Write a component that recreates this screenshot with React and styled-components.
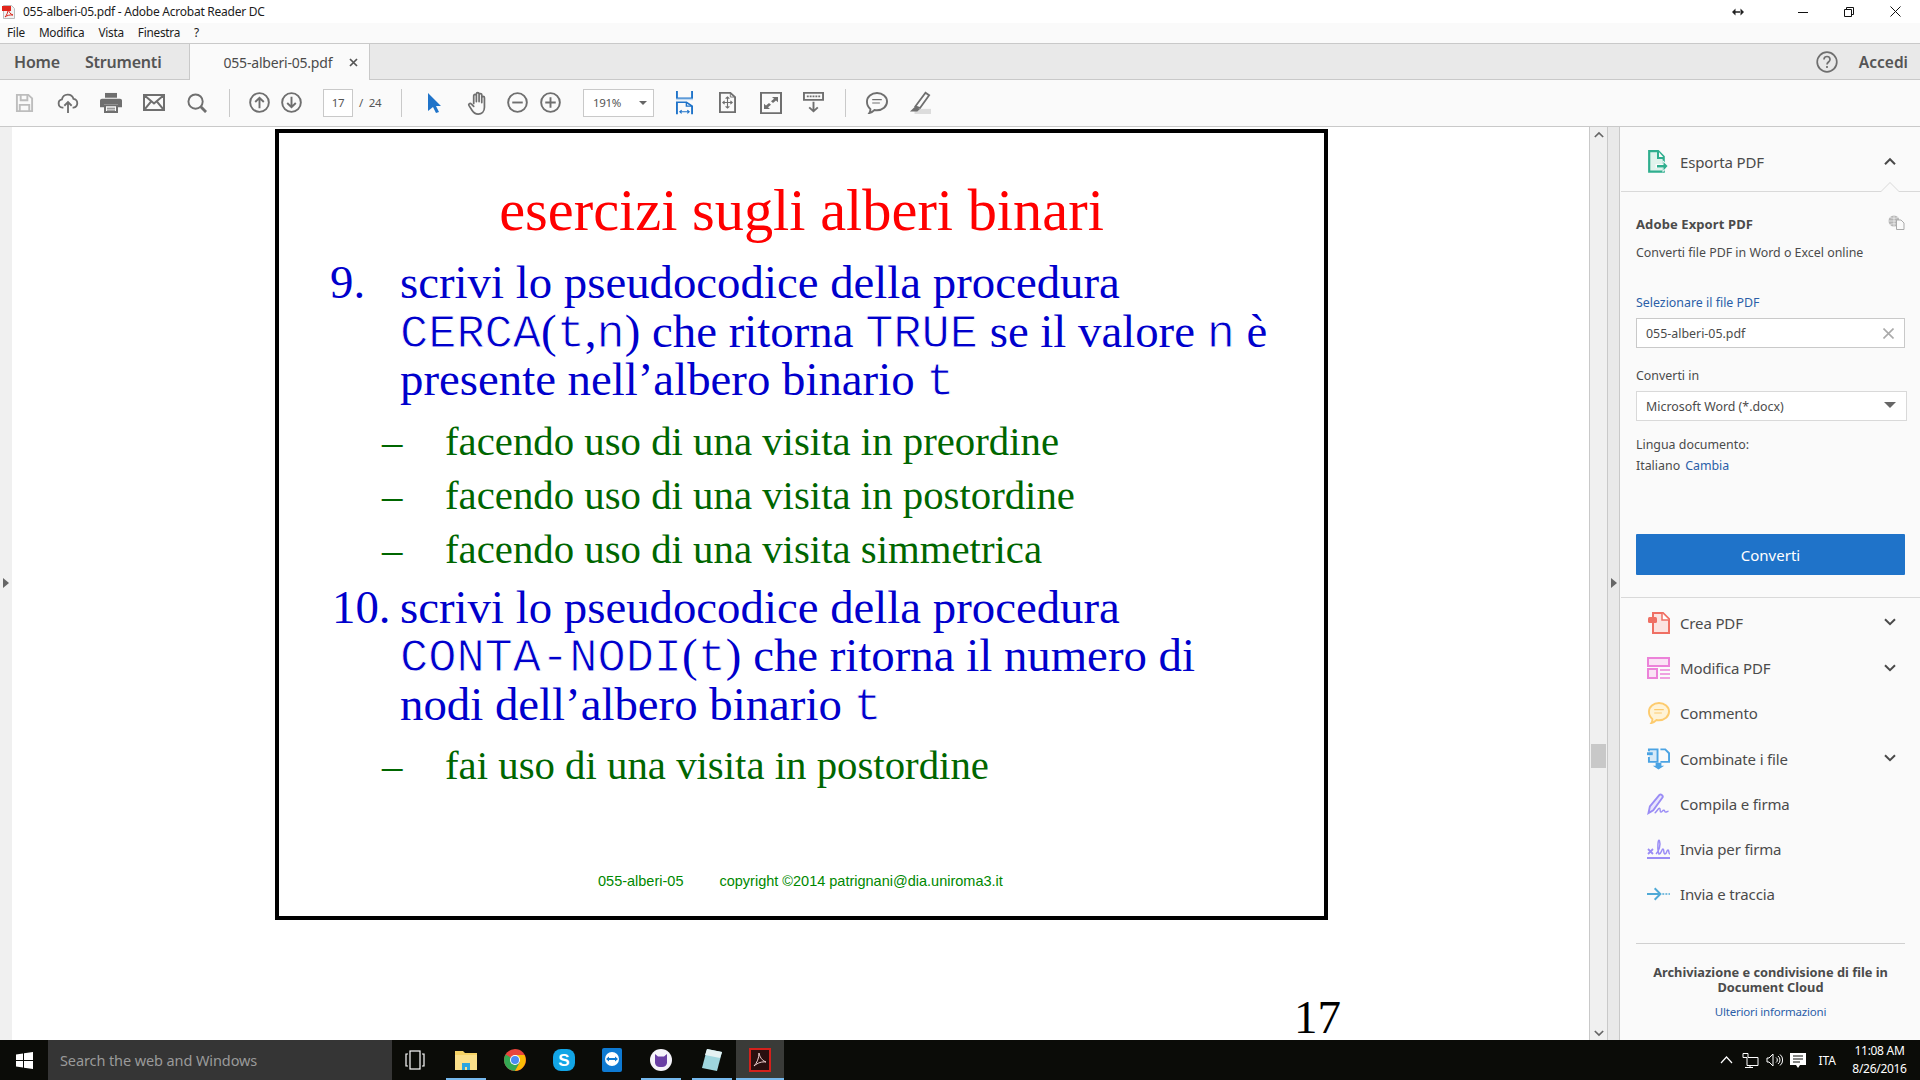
import React from 'react';
import styled, { createGlobalStyle } from 'styled-components';

const GlobalStyle = createGlobalStyle`
  html, body { margin: 0; padding: 0; width: 1920px; height: 1080px; overflow: hidden; background: #fff; }
  * { box-sizing: border-box; }
  body { font-family: "Noto Sans", "Open Sans", sans-serif; color: #4b4b4b; }
`;

const Screen = styled.div`
  width: 1920px;
  height: 1080px;
  display: flex;
  flex-direction: column;
`;

const TitleBar = styled.div`
  height: 23px;
  background: #fff;
  display: flex;
  align-items: center;
  padding: 0 2px 0 2px;
  font-size: 12px;
  letter-spacing: -0.25px;
  color: #1c1c1c;
  svg { display: block; }
`;
const TitleText = styled.span`
  margin-left: 7px;
  flex: 1;
`;
const WinButton = styled.div`
  width: ${(p) => p.$w || 46}px;
  height: 23px;
  display: flex;
  align-items: center;
  justify-content: center;
`;

const MenuBar = styled.div`
  height: 21px;
  background: #fafafa;
  border-bottom: 1px solid #c9c9c9;
  display: flex;
  align-items: center;
  padding: 0 0 2px 7px;
  gap: 14px;
  font-size: 11.8px;
  letter-spacing: -0.25px;
  color: #1c1c1c;
`;

const TabBar = styled.div`
  height: 36px;
  background: #e9e9e9;
  border-bottom: 1px solid #c9c9c9;
  display: flex;
  align-items: stretch;
`;
const NavTab = styled.div`
  font-size: 16px;
  font-weight: 600;
  color: #555;
  letter-spacing: -0.2px;
  display: flex;
  align-items: center;
  margin-left: ${(p) => p.$ml}px;
`;
const DocTab = styled.div`
  width: 181px;
  margin-left: 27px;
  height: 36px;
  background: #fafafa;
  border-left: 1px solid #c9c9c9;
  border-right: 1px solid #c9c9c9;
  display: flex;
  align-items: center;
  padding-left: 34px;
  font-size: 14px;
  letter-spacing: -0.2px;
  color: #4b4b4b;
`;
const TabClose = styled.span`
  margin-left: 17px;
  display: flex;
`;
const TabSpacer = styled.div`
  flex: 1;
`;
const HelpIcon = styled.div`
  display: flex;
  align-items: center;
  margin-right: 21px;
`;
const Accedi = styled.div`
  font-size: 15.5px;
  font-weight: 600;
  color: #555;
  display: flex;
  align-items: center;
  margin-right: 12px;
`;

const Toolbar = styled.div`
  height: 47px;
  background: #fafafa;
  border-bottom: 1px solid #c9c9c9;
  display: flex;
  align-items: center;
  padding: 0 0 1px 3px;
`;
const ToolBtn = styled.div`
  width: ${(p) => p.$w || 43}px;
  height: 32px;
  display: flex;
  align-items: center;
  justify-content: center;
  svg { display: block; }
`;
const Sep = styled.div`
  width: 1px;
  height: 28px;
  background: #c9c9c9;
  margin: 0 ${(p) => p.$mr}px 0 ${(p) => p.$ml}px;
`;
const PageInput = styled.div`
  width: 30px;
  height: 28px;
  border: 1px solid #c9c9c9;
  background: #fff;
  font-size: 11.5px;
  letter-spacing: -0.3px;
  display: flex;
  align-items: center;
  justify-content: center;
  margin-left: 16px;
  color: #555;
`;
const PageTotal = styled.div`
  font-size: 11.5px;
  letter-spacing: -0.3px;
  color: #555;
  width: 48px;
  padding-left: 6px;
  word-spacing: 3px;
`;
const ZoomBox = styled.div`
  width: 71px;
  height: 28px;
  border: 1px solid #c9c9c9;
  background: #fff;
  font-size: 11.5px;
  letter-spacing: -0.3px;
  display: flex;
  align-items: center;
  justify-content: space-between;
  padding: 0 6px 0 9px;
  margin: 0 9px 0 17px;
  color: #555;
`;
const Caret = styled.span`
  width: 0;
  height: 0;
  border-left: 4px solid transparent;
  border-right: 4px solid transparent;
  border-top: 4px solid #666;
`;

const Main = styled.div`
  flex: 1;
  display: flex;
  min-height: 0;
`;
const SideStrip = styled.div`
  width: ${(p) => p.$w}px;
  flex: none;
  background: ${(p) => p.$bg};
  border-right: ${(p) => (p.$line ? '1px solid #c9c9c9' : 'none')};
  display: flex;
  align-items: center;
  justify-content: center;
`;
const Triangle = styled.span`
  width: 0;
  height: 0;
  margin-top: -2px;
  border-top: 5px solid transparent;
  border-bottom: 5px solid transparent;
  border-left: 6px solid #666;
`;

const PageArea = styled.div`
  flex: 1;
  min-width: 0;
  background: #fff;
  padding: 2px 0 0 263px;
`;
const Slide = styled.div`
  width: 1053px;
  height: 791px;
  border: 4px solid #000;
  padding-top: 48px;
  font-family: "Liberation Serif", "Times New Roman", serif;
`;
const SlideTitle = styled.div`
  color: #f00;
  font-size: 58.4px;
  line-height: 60px;
  text-align: center;
  margin-bottom: 17px;
`;
const Item = styled.div`
  display: grid;
  grid-template-columns: ${(p) => p.$col || 70}px 1fr;
  padding-left: ${(p) => p.$left || 51}px;
  font-size: 46.8px;
  line-height: 48.5px;
  color: #00c;
  margin-top: ${(p) => p.$mt || 0}px;
`;
const SubItem = styled.div`
  display: grid;
  grid-template-columns: 63px 1fr;
  padding-left: 103px;
  font-size: 40.8px;
  line-height: 54px;
  color: #060;
  margin-top: ${(p) => p.$mt || 0}px;
`;
const Code = styled.span`
  font-family: "Liberation Mono", "Courier New", monospace;
  font-size: 47px;
  line-height: 0;
  -webkit-text-stroke: 0.9px #fff;
`;
const SlideFooter = styled.div`
  display: flex;
  gap: 36px;
  margin: 79px 0 0 319px;
  font-family: "Liberation Sans", Arial, sans-serif;
  font-size: 14.5px;
  line-height: 18px;
  color: #080;
`;
const PageNumber = styled.div`
  font-family: "Liberation Serif", "Times New Roman", serif;
  font-size: 47px;
  line-height: 44px;
  color: #000;
  margin: 75px 0 0 1019px;
`;

const Scrollbar = styled.div`
  width: 19px;
  flex: none;
  background: #f0f0f0;
  border-left: 1px solid #c9c9c9;
  border-right: 1px solid #c9c9c9;
  display: flex;
  flex-direction: column;
  align-items: center;
  justify-content: space-between;
  padding: 4px 0 3px;
  position: relative;
`;
const ScrollThumb = styled.div`
  position: absolute;
  left: 1px;
  top: 617px;
  width: 15px;
  height: 24px;
  background: #c8c8c8;
`;

const Panel = styled.div`
  width: 300px;
  flex: none;
  background: #fafafa;
  overflow: hidden;
`;
const PanelHead = styled.div`
  height: 65px;
  border-bottom: 1px solid #d9d9d9;
  margin-left: 1px;
  padding: 5px 24px 0 26px;
  display: flex;
  align-items: center;
  font-size: 15px;
  letter-spacing: -0.15px;
  position: relative;
`;
const Notch = styled.span`
  position: absolute;
  right: 20px;
  bottom: -1px;
  width: 0;
  height: 0;
  border-left: 10px solid transparent;
  border-right: 10px solid transparent;
  border-bottom: 10px solid #d9d9d9;
  &::after {
    content: '';
    position: absolute;
    left: -9px;
    top: 1px;
    width: 0;
    height: 0;
    border-left: 9px solid transparent;
    border-right: 9px solid transparent;
    border-bottom: 9px solid #fafafa;
  }
`;
const IconSlot = styled.span`
  width: 23px;
  display: flex;
  justify-content: center;
  flex: none;
`;
const RowLabel = styled.span`
  margin-left: 10px;
  flex: 1;
`;
const ExportSection = styled.div`
  padding: 23px 14px 22px 15px;
  border-bottom: 1px solid #d9d9d9;
  margin-left: 1px;
`;
const ExportHead = styled.div`
  display: flex;
  justify-content: space-between;
  align-items: center;
  height: 18px;
  font-size: 13px;
  font-weight: 700;
  letter-spacing: 0.1px;
  padding-right: 1px;
  svg { margin-top: -4px; }
`;
const SmallText = styled.div`
  font-size: 12.4px;
  line-height: 18px;
  color: ${(p) => p.$color || '#4b4b4b'};
  margin-top: ${(p) => p.$mt || 0}px;
`;
const LinkText = styled.span`
  color: #2a5ea8;
  margin-left: 5px;
`;
const Field = styled.div`
  height: 30px;
  width: ${(p) => p.$w}px;
  margin-top: ${(p) => p.$mt}px;
  background: #fff;
  border: 1px solid ${(p) => p.$border};
  display: flex;
  align-items: center;
  justify-content: space-between;
  padding: 0 10px 0 9px;
  font-size: 12.4px;
`;
const SelectCaret = styled.span`
  width: 0;
  height: 0;
  margin-top: -3px;
  border-left: 6px solid transparent;
  border-right: 6px solid transparent;
  border-top: 6px solid #666;
`;
const ConvertButton = styled.div`
  height: 41px;
  width: 269px;
  margin-top: 59px;
  background: #1f73c9;
  border-radius: 1px;
  color: #fff;
  font-size: 15px;
  display: flex;
  align-items: center;
  justify-content: center;
`;
const ToolList = styled.div`
  padding-top: 2px;
`;
const ToolRow = styled.div`
  height: 45.3px;
  display: flex;
  align-items: center;
  padding: 0 24px 0 27px;
  font-size: 15px;
  letter-spacing: -0.15px;
  svg { flex: none; }
`;
const PanelFooter = styled.div`
  margin: 26px 15px 0 16px;
  border-top: 1px solid #d0d0d0;
  padding-top: 21px;
  text-align: center;
`;
const FooterBold = styled.div`
  font-size: 12.8px;
  line-height: 15px;
  font-weight: 700;
`;
const FooterLink = styled.div`
  font-size: 11.5px;
  line-height: 18px;
  letter-spacing: -0.2px;
  color: #2a5ea8;
  margin-top: 8px;
`;

const Taskbar = styled.div`
  height: 40px;
  flex: none;
  background: #0b0c08;
  display: flex;
  align-items: stretch;
  color: #fff;
  position: relative;
`;
const StartButton = styled.div`
  width: 48px;
  display: flex;
  align-items: center;
  justify-content: center;
`;
const SearchBox = styled.div`
  width: 344px;
  background: #353535;
  color: #9a9a9a;
  font-size: 14.5px;
  letter-spacing: -0.1px;
  display: flex;
  align-items: center;
  padding-left: 12px;
`;
const TaskSlot = styled.div`
  width: ${(p) => p.$w || 48}px;
  padding-right: ${(p) => p.$pr || 0}px;
  display: flex;
  align-items: center;
  justify-content: center;
  position: relative;
  background: ${(p) => (p.$active ? '#3a3b38' : 'transparent')};
  &::after {
    content: '';
    display: ${(p) => (p.$open ? 'block' : 'none')};
    position: absolute;
    bottom: 0;
    left: 50%;
    transform: translateX(-50%);
    width: ${(p) => (p.$active ? '100%' : '40px')};
    height: 2px;
    background: #76b9ed;
  }
`;
const Tray = styled.div`
  margin-left: auto;
  display: flex;
  align-items: center;
`;
const TrayIcon = styled.div`
  width: 24px;
  display: flex;
  justify-content: center;
`;
const TrayLang = styled.div`
  font-size: 12px;
  margin: 0 10px 0 8px;
`;
const Clock = styled.div`
  width: 67px;
  text-align: center;
  font-size: 12px;
  line-height: 18px;
  letter-spacing: -0.3px;
  margin-right: 7px;
`;

/* icons */
const G = '#6f6f6f';
const Chevron = ({ up, color = '#4a4a4a', size = 12 }) => (
  <svg width={size} height={size * 0.7} viewBox="0 0 12 8">
    <path d={up ? 'M1 7l5-5 5 5' : 'M1 1l5 5 5-5'} fill="none" stroke={color} strokeWidth="2" />
  </svg>
);
const PdfSmall = () => (
  <svg width="14" height="14" viewBox="0 0 14 14">
    <path d="M1.500 0.500h8l3 3v10h-11z" fill="#f3f3f3" stroke="#bbb" />
    <rect x="0" y="1" width="9" height="5" fill="#e1251b" />
    <path d="M3 12c2-2 3-5 3-8 1 3 2 5 5 6-3-.3-6 .3-8 2z" fill="none" stroke="#d8261c" />
  </svg>
);
const Save = () => (
  <svg width="19" height="20" viewBox="0 0 20 22" fill="none" stroke="#bdbdbd" strokeWidth="2" preserveAspectRatio="none">
    <path d="M2 2h12l4 4v14H2z" />
    <path d="M6 2v6h7V2M5 20v-7h10v7" />
  </svg>
);
const Cloud = () => (
  <svg width="22" height="22" viewBox="0 0 24 24" fill="none" stroke={G} strokeWidth="2">
    <path d="M7 17H6a4.500 4.500 0 0 1-.6-8.900 6.500 6.500 0 0 1 12.600-.6A4.800 4.800 0 0 1 18 17h-1" />
    <path d="M12 23V11M8 15l4-4 4 4" />
  </svg>
);
const Print = () => (
  <svg width="22" height="21" viewBox="0 0 22 22" preserveAspectRatio="none">
    <path d="M5 1h12v5H5z" fill={G} />
    <path d="M2 7h18a2 2 0 0 1 2 2v7h-4v-3H4v3H0V9a2 2 0 0 1 2-2z" fill={G} />
    <path d="M5 14h12v7H5z" fill="none" stroke={G} strokeWidth="2" />
    <path d="M7 17h8M7 19h8" stroke={G} />
  </svg>
);
const Mail = () => (
  <svg width="22" height="17" viewBox="0 0 22 18" fill="none" stroke={G} strokeWidth="2" preserveAspectRatio="none">
    <path d="M1 1h20v16H1zM1 1l10 9 10-9M1 17l7-9M21 17l-7-9" />
  </svg>
);
const Search = () => (
  <svg width="20" height="20" viewBox="0 0 21 21" fill="none" stroke={G} strokeWidth="2">
    <circle cx="9" cy="9" r="7.500" />
    <path d="M14.500 14.500L20 20" strokeWidth="3" />
  </svg>
);
const Arrow = ({ down }) => (
  <svg width="21" height="21" viewBox="0 0 22 22" fill="none" stroke={G} strokeWidth="2">
    <circle cx="11" cy="11" r="9.800" />
    <path d={down ? 'M11 5v11M6.500 11.500L11 16l4.500-4.500' : 'M11 17V6M6.500 10.500L11 6l4.500 4.500'} />
  </svg>
);
const Pointer = () => (
  <svg width="14" height="20" viewBox="0 0 14 20">
    <path d="M1 0l13 13H9l3 6-3 1-3-6-5 4z" fill="#1f73c9" />
  </svg>
);
const Hand = () => (
  <svg width="23" height="24" viewBox="0 0 24 25" fill="none" stroke={G} strokeWidth="1.800" strokeLinecap="round" strokeLinejoin="round">
    <path d="M7 13V5a1.400 1.400 0 0 1 2.800 0v6V3a1.400 1.400 0 0 1 2.800 0v8-7a1.400 1.400 0 0 1 2.800 0v8-5a1.400 1.400 0 0 1 2.800 0v10c0 4.500-3 7-6.500 7-3 0-5-1.500-6.500-4L2 15c-.8-1.500 1.200-2.800 2.400-1.500L7 16" />
  </svg>
);
const Zoomer = ({ plus }) => (
  <svg width="21" height="21" viewBox="0 0 22 22" fill="none" stroke={G} strokeWidth="2">
    <circle cx="11" cy="11" r="9.800" />
    <path d={plus ? 'M5.500 11h11M11 5.500v11' : 'M5.500 11h11'} />
  </svg>
);
const FitWidth = () => (
  <svg width="17" height="24" viewBox="0 0 18 30" fill="none" stroke="#1f73c9" strokeWidth="2" preserveAspectRatio="none">
    <path d="M1 0v9h16V0" />
    <path d="M0 10.500h18" stroke="#bcd6f0" strokeWidth="2" />
    <path d="M1 29V14h10l6 5v10" />
    <path d="M11 14v5h6" strokeWidth="1.500" />
    <path d="M4 26h10M6 24l-2 2 2 2M12 24l2 2-2 2" strokeWidth="1.200" />
  </svg>
);
const FitPage = () => (
  <svg width="17" height="21" viewBox="0 0 18 25" fill="none" stroke={G} preserveAspectRatio="none">
    <path d="M1 1h11l5 5v18H1z" strokeWidth="2" />
    <path d="M12 1v5h5" />
    <path d="M9 6v13M4 12.500h10M7 8l2-2 2 2M7 17l2 2 2-2M6 10.500l-2 2 2 2M12 10.500l2 2-2 2" strokeWidth="1.200" />
  </svg>
);
const FullScreen = () => (
  <svg width="22" height="22" viewBox="0 0 22 26" preserveAspectRatio="none">
    <path d="M1 1h20v24H1z" fill="none" stroke={G} strokeWidth="2" />
    <path d="M12 6h6v6l-2-2-3 3-2-2 3-3zM10 20H4v-6l2 2 3-3 2 2-3 3z" fill={G} />
  </svg>
);
const ReadMode = () => (
  <svg width="21" height="21" viewBox="0 0 22 24" fill="none" stroke={G} strokeWidth="2" preserveAspectRatio="none">
    <path d="M1 1h20v8H1z" />
    <path d="M4 5h14" strokeDasharray="2 1" />
    <path d="M11 11v11M6.500 17.500L11 22l4.500-4.500" />
  </svg>
);
const Bubble = ({ stroke = G, fill = 'none', line = G }) => (
  <svg width="22" height="22" viewBox="0 0 23 23" fill={fill} stroke={stroke} strokeWidth="2">
    <path d="M11.500 1C17.300 1 22 4.900 22 10s-4.700 9-10.500 9c-1 0-1.500 0-2.500-.2C7.500 20.500 6 21.500 3.500 22c1-1.500 1.200-3 1-4.300C2.300 16 1 13.500 1 10 1 4.900 5.700 1 11.500 1z" />
    <path d="M6.500 8h10M6.500 11.500h8" stroke={line} strokeWidth="1.300" />
  </svg>
);
const Marker = () => (
  <svg width="22" height="23" viewBox="0 0 24 27" preserveAspectRatio="none">
    <rect x="6" y="21" width="18" height="6" fill="#dcdcdc" />
    <path d="M18 2l4 3-10 15-5-2z" fill="none" stroke={G} strokeWidth="2" />
    <path d="M7 18l5 3-3 3H1z" fill={G} />
  </svg>
);
const ExportIcon = () => (
  <svg width="21" height="23" viewBox="0 0 21 23">
    <path d="M1.200 1.200h9l5.500 5.500v15H1.200z" fill="#e0f3ec" stroke="#2fae8e" strokeWidth="2.200" />
    <path d="M10 1v7h6" fill="#fafafa" stroke="#2fae8e" strokeWidth="2" />
    <path d="M7.500 14h7v-4l6.500 6-6.500 6.500v-4.500h-7z" fill="#fafafa" />
    <path d="M9 15h6.500v-3l4 4-4 4.500v-3H9z" fill="#2fae8e" />
  </svg>
);
const CloudDoc = () => (
  <svg width="17" height="15" viewBox="0 0 17 15">
    <circle cx="6" cy="6" r="5.500" fill="#b5b5b5" />
    <path d="M0.500 6h11M6 .5v11M2 2.500c2 1 6 1 8 0M2 9.500c2-1 6-1 8 0" stroke="#fff" strokeWidth=".6" fill="none" />
    <path d="M8.500 5h4.500l3 3v6.500H8.500z" fill="#fafafa" stroke="#aaa" />
  </svg>
);
const CreaIcon = () => (
  <svg width="22" height="22" viewBox="0 0 22 22">
    <path d="M5 1h10l6 6v14H5z" fill="#fbe3e0" stroke="#ef6f63" strokeWidth="2" />
    <path d="M14 1v7h7" fill="#fff" stroke="#ef6f63" strokeWidth="1.500" />
    <rect x="0" y="5" width="9" height="6" rx="1.500" fill="#ef6f63" />
  </svg>
);
const ModificaIcon = () => (
  <svg width="23" height="22" viewBox="0 0 23 22">
    <rect x="1" y="1" width="21" height="8" fill="#fae3f5" stroke="#ec82d9" strokeWidth="2" />
    <rect x="1" y="12" width="9" height="9" fill="#fae3f5" stroke="#ec82d9" strokeWidth="2" />
    <path d="M13 13h10M13 17h10M13 21h10" stroke="#ec82d9" strokeWidth="1.300" />
  </svg>
);
const CombineIcon = () => (
  <svg width="23" height="23" viewBox="0 0 24 23" fill="none" stroke="#4ba3e3" strokeWidth="2">
    <path d="M2 4V2h9v13H2v-5" fill="#d6e9f8" />
    <path d="M14 2h5l4 4v9h-9" />
    <path d="M0 5h6v3H0z" fill="#4ba3e3" strokeWidth="0" />
    <path d="M9 16h6v3h3l-6 4-6-4h3z" fill="#4ba3e3" stroke="none" />
  </svg>
);
const SignIcon = () => (
  <svg width="23" height="22" viewBox="0 0 24 23" fill="none" stroke="#9a8cf5" strokeWidth="2">
    <path d="M1.500 21L3 14 13 2c1.500-1.500 4.500 1 3 3L6.500 18z" fill="#e8e5fd" />
    <path d="M8 21c2-1 3.500-5 5-5s0 4 1.500 4 1.500-2 3-2 .5 2 2 2 1.500-1 3-1" strokeWidth="1.500" />
  </svg>
);
const SendSignIcon = () => (
  <svg width="23" height="20" viewBox="0 0 23 20" fill="none" stroke="#9a8cf5">
    <path d="M0 19h23" strokeWidth="2" />
    <path d="M1 10l5 5M6 10l-5 5" strokeWidth="1.800" />
    <path d="M9 15c3-3 5-9 3.500-13S10 11 12 15c3-1 2.500-5 4-5s0 5 2 5 1.500-4 3-4 0 4 2 4" strokeWidth="1.500" />
  </svg>
);
const TrackIcon = () => (
  <svg width="23" height="14" viewBox="0 0 24 14" fill="none" stroke="#4fa9d6" strokeWidth="2">
    <path d="M0 7h13M8 1l6 6-6 6" />
    <path d="M16 7h8" strokeDasharray="2 1.200" strokeWidth="1.600" />
  </svg>
);
const WinLogo = () => (
  <svg width="17" height="17" viewBox="0 0 17 17" fill="#fff">
    <path d="M0 2.400L7 1.400V8H0zM8 1.200L17 0v8H8zM0 9h7v6.600l-7-1zM8 9h9v8l-9-1.200z" />
  </svg>
);
const TaskView = () => (
  <svg width="20" height="20" viewBox="0 0 20 20" fill="none" stroke="#fff" strokeWidth="1.200">
    <rect x="5" y="1" width="10" height="18" />
    <path d="M3 4H1v12h2M17 4h2v12h-2" />
  </svg>
);
const Explorer = () => (
  <svg width="22" height="20" viewBox="0 0 22 20">
    <path d="M0 1h8l2 2h12v15H0z" fill="#f6d365" />
    <rect x="0" y="5" width="22" height="15" fill="#fbe08a" />
    <path d="M7 20v-7h8v7h-3v-3h-2v3z" fill="#2aa5e0" />
  </svg>
);
const Chrome = () => (
  <svg width="22" height="22" viewBox="0 0 22 22">
    <circle cx="11" cy="11" r="11" fill="#e8453c" />
    <path d="M11 11L1.500 5.500A11 11 0 0 0 11 22l5-9z" fill="#34a853" />
    <path d="M11 6h9.500A11 11 0 0 1 11 22l5-9z" fill="#fbbc05" />
    <circle cx="11" cy="11" r="5" fill="#fff" />
    <circle cx="11" cy="11" r="4" fill="#4b8bf4" />
  </svg>
);
const Skype = () => (
  <svg width="22" height="24" viewBox="0 0 22 24">
    <rect x="0" y="1" width="22" height="22" rx="8" fill="#12a5e6" />
    <text x="11" y="18" textAnchor="middle" fontFamily="Liberation Sans" fontWeight="700" fontSize="17" fill="#fff">S</text>
  </svg>
);
const TeamViewer = () => (
  <svg width="20" height="24" viewBox="0 0 20 24">
    <rect width="20" height="24" rx="2" fill="#0e7ad2" />
    <circle cx="10" cy="11" r="7" fill="#fff" />
    <path d="M4 11l3-2.500v1.500h6V8.500l3 2.500-3 2.500V12H7v1.500z" fill="#0e7ad2" />
  </svg>
);
const CatApp = () => (
  <svg width="22" height="22" viewBox="0 0 22 22">
    <circle cx="11" cy="11" r="11" fill="#f5f3fa" />
    <path d="M5 5l3 2.500h6L17 5v9a5 5 0 0 1-5 4h-2a5 5 0 0 1-5-4z" fill="#6a3fa5" />
  </svg>
);
const Notepad = () => (
  <svg width="22" height="24" viewBox="0 0 22 24">
    <path d="M6 1l15 3-5 19-15-3z" fill="#9fd6de" />
    <path d="M6 1l15 3-2 6L4 7z" fill="#e4f1f2" />
  </svg>
);
const AcrobatTask = () => (
  <svg width="22" height="24" viewBox="0 0 22 24">
    <rect x="1" y="1" width="20" height="22" fill="#2a0f0f" stroke="#d4211c" strokeWidth="2" />
    <path d="M5 18c3-3 5-8 5-13 0 0 1 7 7 9-4-.500-8 .5-12 4z" fill="none" stroke="#f0d0d0" strokeWidth="1" />
  </svg>
);

const tools = [
  { name: 'Crea PDF', icon: <CreaIcon />, more: true },
  { name: 'Modifica PDF', icon: <ModificaIcon />, more: true },
  { name: 'Commento', icon: <Bubble stroke="#fdcb6e" fill="#fff3d6" line="#fdcb6e" /> },
  { name: 'Combinate i file', icon: <CombineIcon />, more: true },
  { name: 'Compila e firma', icon: <SignIcon /> },
  { name: 'Invia per firma', icon: <SendSignIcon /> },
  { name: 'Invia e traccia', icon: <TrackIcon /> },
];

const App = () => {
  return (
    <Screen>
      <GlobalStyle />
      <TitleBar>
        <PdfSmall />
        <TitleText>055-alberi-05.pdf - Adobe Acrobat Reader DC</TitleText>
        <WinButton>
          <svg width="12" height="8" viewBox="0 0 12 8"><path d="M0 4l3.500-3.500v7zM12 4L8.500 .5v7zM3 3.300h6v1.400H3z" fill="#222" /></svg>
        </WinButton>
        <WinButton $w={19} />
        <WinButton>
          <svg width="10" height="10" viewBox="0 0 10 10"><path d="M0 5.500h10" stroke="#111" /></svg>
        </WinButton>
        <WinButton>
          <svg width="10" height="10" viewBox="0 0 10 10" fill="none" stroke="#111"><path d="M.5 2.500h7v7h-7zM2.500 2.500v-2h7v7h-2" /></svg>
        </WinButton>
        <WinButton>
          <svg width="11" height="11" viewBox="0 0 11 11"><path d="M.5 .5l10 10M10.500 .5l-10 10" stroke="#111" /></svg>
        </WinButton>
      </TitleBar>

      <MenuBar>
        <span>File</span>
        <span>Modifica</span>
        <span>Vista</span>
        <span>Finestra</span>
        <span>?</span>
      </MenuBar>

      <TabBar>
        <NavTab $ml={14}>Home</NavTab>
        <NavTab $ml={25}>Strumenti</NavTab>
        <DocTab>
          055-alberi-05.pdf
          <TabClose>
            <svg width="9" height="9" viewBox="0 0 9 9"><path d="M1 1l7 7M8 1L1 8" stroke="#555" strokeWidth="1.700" /></svg>
          </TabClose>
        </DocTab>
        <TabSpacer />
        <HelpIcon>
          <svg width="22" height="22" viewBox="0 0 22 22" fill="none" stroke="#6f6f6f" strokeWidth="1.700">
            <circle cx="11" cy="11" r="9.800" />
            <path d="M8 8.500c0-4 6-4 6 0 0 2.500-3 2.500-3 5" />
            <path d="M11 15v2" />
          </svg>
        </HelpIcon>
        <Accedi>Accedi</Accedi>
      </TabBar>

      <Toolbar>
        <ToolBtn><Save /></ToolBtn>
        <ToolBtn><Cloud /></ToolBtn>
        <ToolBtn><Print /></ToolBtn>
        <ToolBtn><Mail /></ToolBtn>
        <ToolBtn><Search /></ToolBtn>
        <Sep $ml={11} $mr={14} />
        <ToolBtn $w={31}><Arrow /></ToolBtn>
        <ToolBtn $w={32}><Arrow down /></ToolBtn>
        <PageInput>17</PageInput>
        <PageTotal>/ 24</PageTotal>
        <Sep $ml={0} $mr={10} />
        <ToolBtn $w={44}><Pointer /></ToolBtn>
        <ToolBtn $w={44}><Hand /></ToolBtn>
        <ToolBtn $w={34}><Zoomer /></ToolBtn>
        <ToolBtn $w={32}><Zoomer plus /></ToolBtn>
        <ZoomBox>191% <Caret /></ZoomBox>
        <ToolBtn><FitWidth /></ToolBtn>
        <ToolBtn><FitPage /></ToolBtn>
        <ToolBtn><FullScreen /></ToolBtn>
        <ToolBtn><ReadMode /></ToolBtn>
        <Sep $ml={10} $mr={10} />
        <ToolBtn $w={42}><Bubble /></ToolBtn>
        <ToolBtn $w={43}><Marker /></ToolBtn>
      </Toolbar>

      <Main>
        <SideStrip $w={12} $bg="#f0f0f0"><Triangle /></SideStrip>
        <PageArea>
          <Slide>
            <SlideTitle>esercizi sugli alberi binari</SlideTitle>
            <Item>
              <span>9.</span>
              <div>
                scrivi lo pseudocodice della procedura<br />
                <Code>CERCA</Code>(<Code>t</Code>,<Code>n</Code>) che ritorna <Code>TRUE</Code> se il valore <Code>n</Code> è<br />
                presente nell’albero binario <Code>t</Code>
              </div>
            </Item>
            <SubItem $mt={11}><span>–</span><span>facendo uso di una visita in preordine</span></SubItem>
            <SubItem><span>–</span><span>facendo uso di una visita in postordine</span></SubItem>
            <SubItem><span>–</span><span>facendo uso di una visita simmetrica</span></SubItem>
            <Item $mt={6} $left={53} $col={68}>
              <span>10.</span>
              <div>
                scrivi lo pseudocodice della procedura<br />
                <Code>CONTA-NODI</Code>(<Code>t</Code>) che ritorna il numero di<br />
                nodi dell’albero binario <Code>t</Code>
              </div>
            </Item>
            <SubItem $mt={11}><span>–</span><span>fai uso di una visita in postordine</span></SubItem>
            <SlideFooter>
              <span>055-alberi-05</span>
              <span>copyright ©2014 patrignani@dia.uniroma3.it</span>
            </SlideFooter>
          </Slide>
          <PageNumber>17</PageNumber>
        </PageArea>
        <Scrollbar>
          <Chevron up color="#666" size={10} />
          <ScrollThumb />
          <Chevron color="#666" size={10} />
        </Scrollbar>
        <SideStrip $w={12} $bg="#e9e9e9" $line><Triangle /></SideStrip>
        <Panel>
          <PanelHead>
            <IconSlot><ExportIcon /></IconSlot>
            <RowLabel>Esporta PDF</RowLabel>
            <Chevron up />
            <Notch />
          </PanelHead>
          <ExportSection>
            <ExportHead>Adobe Export PDF <CloudDoc /></ExportHead>
            <SmallText $mt={11}>Converti file PDF in Word o Excel online</SmallText>
            <SmallText $mt={32} $color="#2a5ea8">Selezionare il file PDF</SmallText>
            <Field $w={269} $mt={6} $border="#c9c9c9">
              055-alberi-05.pdf
              <svg width="11" height="11" viewBox="0 0 11 11"><path d="M.5 .5l10 10M10.500 .5l-10 10" stroke="#aaa" strokeWidth="1.600" /></svg>
            </Field>
            <SmallText $mt={19}>Converti in</SmallText>
            <Field $w={271} $mt={6} $border="#d9d9d9">
              Microsoft Word (*.docx)
              <SelectCaret />
            </Field>
            <SmallText $mt={15}>Lingua documento:</SmallText>
            <SmallText $mt={3}>Italiano<LinkText>Cambia</LinkText></SmallText>
            <ConvertButton>Converti</ConvertButton>
          </ExportSection>
          <ToolList>
            {tools.map((tool) => (
              <ToolRow key={tool.name}>
                <IconSlot>{tool.icon}</IconSlot>
                <RowLabel>{tool.name}</RowLabel>
                {tool.more && <Chevron />}
              </ToolRow>
            ))}
          </ToolList>
          <PanelFooter>
            <FooterBold>Archiviazione e condivisione di file in<br />Document Cloud</FooterBold>
            <FooterLink>Ulteriori informazioni</FooterLink>
          </PanelFooter>
        </Panel>
      </Main>

      <Taskbar>
        <StartButton><WinLogo /></StartButton>
        <SearchBox>Search the web and Windows</SearchBox>
        <TaskSlot $w={50} $pr={4}><TaskView /></TaskSlot>
        <TaskSlot $open><Explorer /></TaskSlot>
        <TaskSlot $w={50}><Chrome /></TaskSlot>
        <TaskSlot><Skype /></TaskSlot>
        <TaskSlot $w={47}><TeamViewer /></TaskSlot>
        <TaskSlot $w={52} $open><CatApp /></TaskSlot>
        <TaskSlot $w={49} $open><Notepad /></TaskSlot>
        <TaskSlot $active $open><AcrobatTask /></TaskSlot>
        <Tray>
          <TrayIcon>
            <svg width="13" height="8" viewBox="0 0 13 8"><path d="M1 7l5.500-6L12 7" fill="none" stroke="#fff" strokeWidth="1.200" /></svg>
          </TrayIcon>
          <TrayIcon>
            <svg width="17" height="15" viewBox="0 0 17 15" fill="none" stroke="#fff"><path d="M1 .5h5v4h10v8H5M1 .5v4h4v8M3 14.500h8M8 12.500v2" /></svg>
          </TrayIcon>
          <TrayIcon>
            <svg width="17" height="14" viewBox="0 0 17 14" fill="none" stroke="#fff"><path d="M1 5h2l4-4v12l-4-4H1zM10 4.500a3 3 0 0 1 0 5M12 3a5 5 0 0 1 0 8M14 1.500a7 7 0 0 1 0 11" /></svg>
          </TrayIcon>
          <TrayIcon>
            <svg width="16" height="15" viewBox="0 0 16 15"><path d="M0 0h16v12h-6l-2 3-2-3H0z" fill="#fff" /><path d="M3 3h10M3 6h10M3 9h7" stroke="#0b0c08" /></svg>
          </TrayIcon>
          <TrayLang>ITA</TrayLang>
          <Clock>11:08 AM<br />8/26/2016</Clock>
        </Tray>
      </Taskbar>
    </Screen>
  );
};

export default App;
